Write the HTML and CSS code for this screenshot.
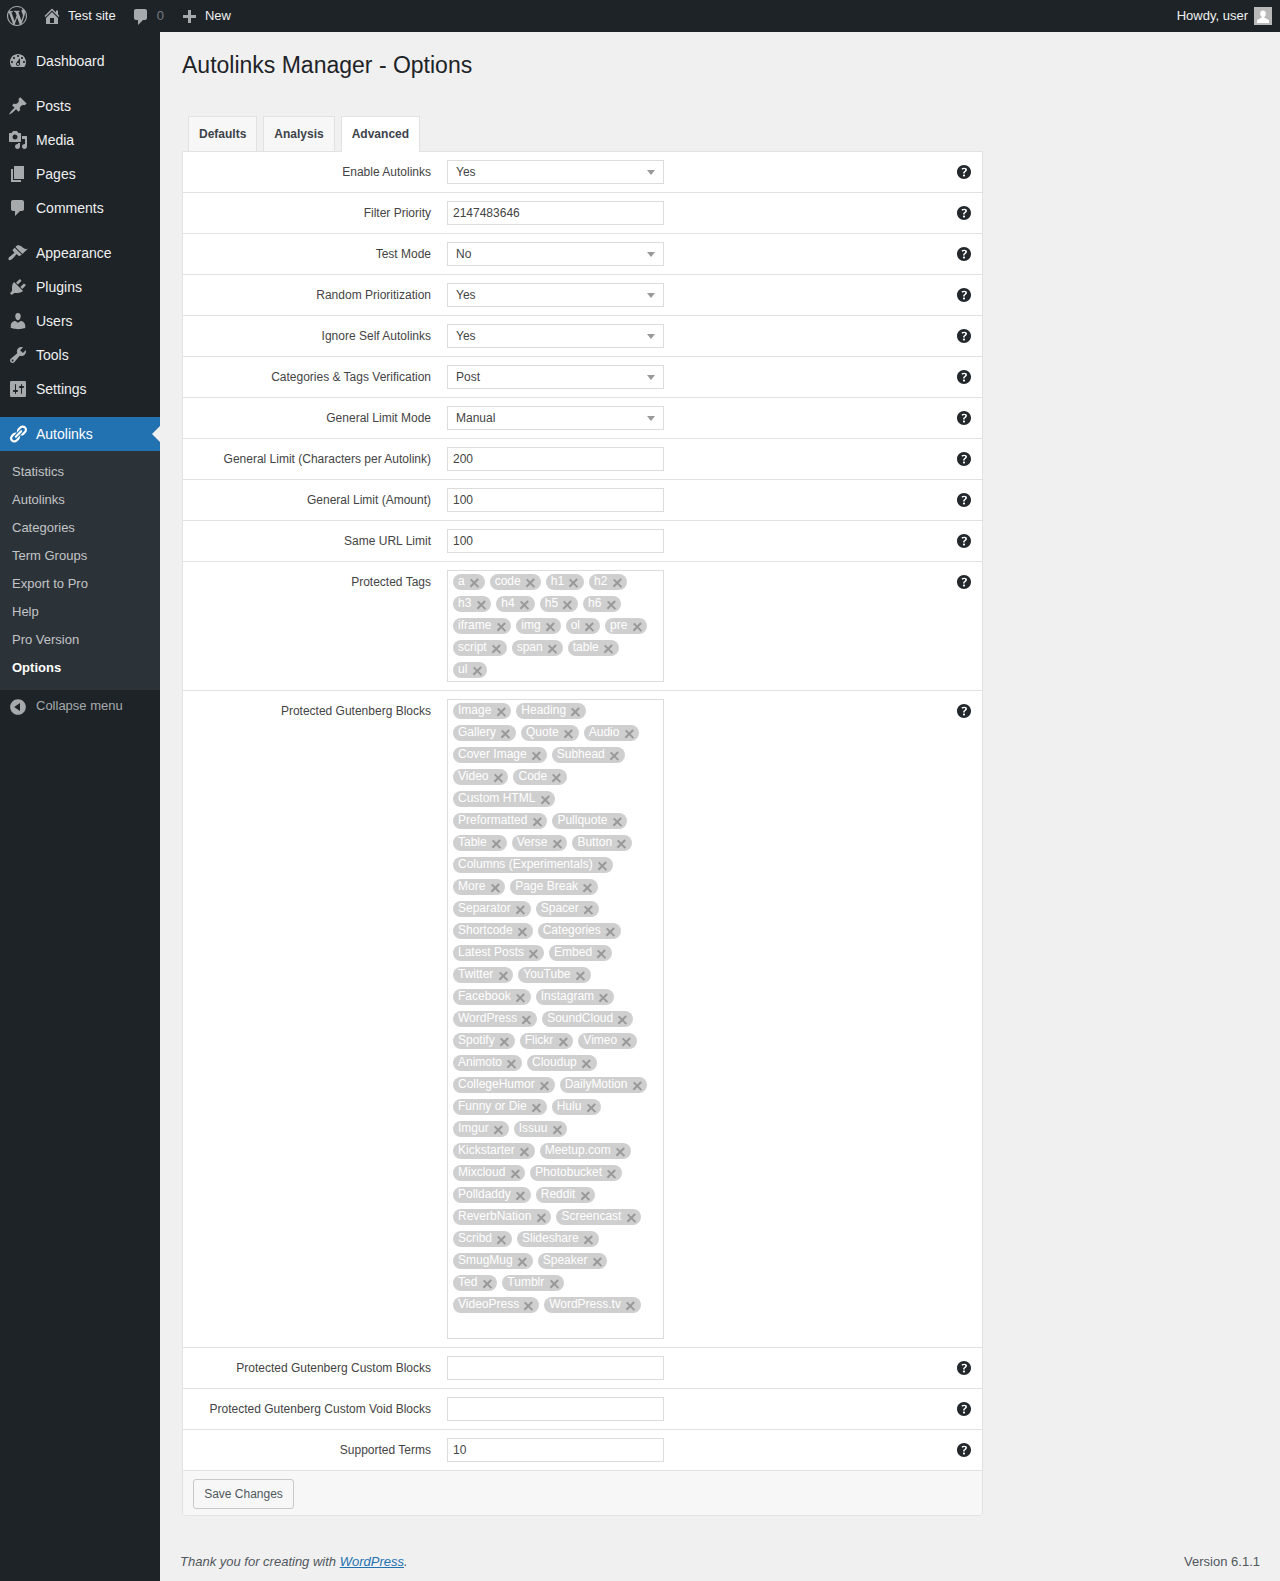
FILE: index.html
```html
<!DOCTYPE html>
<html lang="en">
<head>
<meta charset="utf-8">
<title>Autolinks Manager - Options</title>
<link rel="stylesheet" href="styles.css">
</head>
<body>
<svg class="defs" width="0" height="0" aria-hidden="true">
<symbol id="i-wp" viewBox="0 0 20 20"><path d="M20 10c0-5.51-4.49-10-10-10C4.48 0 0 4.49 0 10c0 5.52 4.48 10 10 10 5.51 0 10-4.48 10-10zM7.78 15.37L4.37 6.22c.55-.02 1.17-.08 1.17-.08.5-.06.44-1.13-.06-1.11 0 0-1.45.11-2.37.11-.18 0-.37 0-.58-.01C4.12 2.69 6.87 1.11 10 1.11c2.33 0 4.45.87 6.05 2.34-.68-.11-1.65.39-1.65 1.58 0 .74.45 1.36.9 2.1.35.61.55 1.36.55 2.46 0 1.49-1.4 5-1.4 5l-3.03-8.37c.54-.02.82-.17.82-.17.5-.05.44-1.25-.06-1.22 0 0-1.44.12-2.38.12-.87 0-2.33-.12-2.33-.12-.5-.03-.56 1.2-.06 1.22l.92.08 1.26 3.41zM17.41 10c.24-.64.74-1.87.43-4.25.7 1.29 1.05 2.71 1.05 4.25 0 3.29-1.73 6.24-4.4 7.78.97-2.59 1.94-5.2 2.92-7.78zM6.1 18.09C3.12 16.65 1.11 13.53 1.11 10c0-1.3.23-2.48.72-3.59C3.25 10.3 4.67 14.2 6.1 18.09zm4.03-6.63l2.58 6.98c-.86.29-1.76.45-2.71.45-.79 0-1.57-.11-2.29-.33.81-2.38 1.62-4.74 2.42-7.1z"/></symbol>
<symbol id="i-home" viewBox="0 0 20 20"><path fill-rule="evenodd" d="M16 8.5l1.53 1.53-1.06 1.06L10 4.62l-6.47 6.47-1.06-1.06L10 2.5l4 4v-2h2v4zm-6-2.46l6 5.99V18H4v-5.97zM12 17v-5H8v5h4z"/></symbol>
<symbol id="i-comment" viewBox="0 0 20 20"><path d="M5 2h9c1.1 0 2 .9 2 2v7c0 1.1-.9 2-2 2h-2l-5 5v-5H5c-1.1 0-2-.9-2-2V4c0-1.1.9-2 2-2z"/></symbol>
<symbol id="i-plus" viewBox="0 0 20 20"><path d="M17 7v3h-5v5H9v-5H4V7h5V2h3v5h5z"/></symbol>
<symbol id="i-dash" viewBox="0 0 20 20"><path fill-rule="evenodd" d="M3.76 16h12.48c1.1-1.37 1.76-3.11 1.76-5 0-4.42-3.58-8-8-8s-8 3.58-8 8c0 1.89.66 3.63 1.76 5zM10 4c.55 0 1 .45 1 1s-.45 1-1 1-1-.45-1-1 .45-1 1-1zM6 6c.55 0 1 .45 1 1s-.45 1-1 1-1-.45-1-1 .45-1 1-1zm8 0c.55 0 1 .45 1 1s-.45 1-1 1-1-.45-1-1 .45-1 1-1zm-5.37 5.55L12 7v6c0 1.1-.9 2-2 2s-2-.9-2-2c0-.57.24-1.08.63-1.45zM4 10c.55 0 1 .45 1 1s-.45 1-1 1-1-.45-1-1 .45-1 1-1zm12 0c.55 0 1 .45 1 1s-.45 1-1 1-1-.45-1-1 .45-1 1-1zm-5 3c0-.55-.45-1-1-1s-1 .45-1 1 .45 1 1 1 1-.45 1-1z"/></symbol>
<symbol id="i-post" viewBox="0 0 20 20"><path d="M10.44 3.02l1.82-1.82 6.36 6.35-1.83 1.82c-1.05-.68-2.48-.57-3.41.36l-.75.75c-.92.93-1.04 2.35-.35 3.41l-1.83 1.82-2.41-2.41-2.8 2.79c-.42.42-3.38 2.71-3.8 2.29s1.86-3.39 2.28-3.81l2.79-2.79L4.1 9.36l1.83-1.82c1.05.69 2.48.57 3.4-.36l.75-.75c.93-.92 1.05-2.35.36-3.41z"/></symbol>
<symbol id="i-media" viewBox="0 0 20 20"><path fill-rule="evenodd" d="M13 11V4c0-.55-.45-1-1-1h-1.67L9 1H5L3.67 3H2c-.55 0-1 .45-1 1v7c0 .55.45 1 1 1h10c.55 0 1-.45 1-1zM7 4.5c1.38 0 2.5 1.12 2.5 2.5S8.38 9.5 7 9.5 4.5 8.38 4.5 7 5.62 4.5 7 4.5zM14 6h5v10.5c0 1.38-1.12 2.5-2.5 2.5S14 17.88 14 16.5s1.12-2.5 2.5-2.5c.17 0 .34.02.5.05V9h-3V6zm-4 8.05V13h2v3.5c0 1.38-1.12 2.5-2.5 2.5S7 17.88 7 16.5 8.12 14 9.5 14c.17 0 .34.02.5.05z"/></symbol>
<symbol id="i-page" viewBox="0 0 20 20"><path d="M6 15V2h10v13H6zm-1 1h8v2H3V5h2v11z"/></symbol>
<symbol id="i-appearance" viewBox="0 0 20 20"><path d="M14.48 11.06L7.41 3.99l1.5-1.5c.5-.56 2.3-.47 3.51.32 1.21.8 1.43 1.28 2.91 2.1 1.18.64 2.45 1.26 4.45.85zm-.71.71L6.7 4.7 4.93 6.47c-.39.39-.39 1.02 0 1.41l1.06 1.06c.39.39.39 1.03 0 1.42-.6.6-1.43 1.11-2.21 1.69-.35.26-.7.53-1.01.84C1.43 13.23.4 14.79.4 15.7c0 .91.64 1.52 1.28 1.52.91 0 2.47-1.02 3.81-2.36.31-.31.58-.66.85-1.02.57-.78 1.08-1.61 1.69-2.21.39-.39 1.02-.39 1.41 0l1.06 1.06c.39.39 1.02.39 1.41 0z"/></symbol>
<symbol id="i-plugin" viewBox="0 0 20 20"><path d="M13.11 4.36L9.87 7.6 8 5.73l3.24-3.24c.35-.34 1.05-.2 1.56.32.52.51.66 1.21.31 1.55zm-8 1.77l.91-1.12 9.01 9.01-1.19.84c-.71.71-2.63 1.16-3.82 1.16H6.14L4.9 17.26c-.59.59-1.54.59-2.12 0-.59-.58-.59-1.53 0-2.12l1.24-1.24v-3.88c0-1.13.4-3.19 1.09-3.89zm7.26 3.97l3.24-3.24c.34-.35 1.04-.21 1.55.31.52.51.66 1.21.31 1.55l-3.24 3.25z"/></symbol>
<symbol id="i-users" viewBox="0 0 20 20"><path d="M10 9.25c-2.27 0-2.73-3.44-2.73-3.44C7 4.02 7.82 2 9.97 2c2.16 0 2.98 2.02 2.71 3.81 0 0-.41 3.44-2.68 3.44zm0 2.57L12.72 10c2.39 0 4.52 2.33 4.52 4.53v2.49s-3.65 1.13-7.24 1.13c-3.65 0-7.24-1.13-7.24-1.13v-2.49c0-2.25 1.94-4.48 4.47-4.48z"/></symbol>
<symbol id="i-tools" viewBox="0 0 20 20"><path fill-rule="evenodd" d="M16.68 9.77c-1.34 1.34-3.3 1.67-4.95.99l-5.41 6.52c-.99.99-2.59.99-3.58 0s-.99-2.59 0-3.57l6.52-5.42c-.68-1.65-.35-3.61.99-4.95 1.28-1.28 3.12-1.62 4.72-1.06l-2.89 2.89 2.82 2.82 2.86-2.87c.53 1.58.18 3.39-1.08 4.65zM3.81 16.21c.4.39 1.04.39 1.43 0 .4-.4.4-1.04 0-1.43-.39-.4-1.03-.4-1.43 0-.39.39-.39 1.03 0 1.43z"/></symbol>
<symbol id="i-settings" viewBox="0 0 20 20"><path fill-rule="evenodd" d="M18 16V4c0-1.1-.1-2-1-2H3c-.9 0-1 .9-1 2v12c0 1.1.1 2 1 2h14c.9 0 1-.9 1-2zM8 11h1c.55 0 1 .45 1 1s-.45 1-1 1H8v1.5c0 .28-.22.5-.5.5s-.5-.22-.5-.5V13H6c-.55 0-1-.45-1-1s.45-1 1-1h1V5.5c0-.28.22-.5.5-.5s.5.22.5.5V11zm5-2h-1c-.55 0-1-.45-1-1s.45-1 1-1h1V5.5c0-.28.22-.5.5-.5s.5.22.5.5V7h1c.55 0 1 .45 1 1s-.45 1-1 1h-1v5.5c0 .28-.22.5-.5.5s-.5-.22-.5-.5V9z"/></symbol>
<symbol id="i-links" viewBox="0 0 20 20"><path d="M17.74 2.76c1.68 1.69 1.68 4.41 0 6.1l-1.53 1.52c-1.12 1.12-2.7 1.47-4.14 1.09l2.62-2.61.76-.77.76-.76c.84-.84.84-2.2 0-3.04-.84-.85-2.2-.85-3.04 0l-.77.76-3.38 3.38c-.37-1.44-.02-3.02 1.1-4.14l1.52-1.53c1.69-1.68 4.42-1.68 6.1 0zM8.59 13.43l5.34-5.34c.42-.42.42-1.1 0-1.52-.44-.43-1.13-.39-1.53 0l-5.33 5.34c-.42.42-.42 1.1 0 1.52.44.43 1.13.39 1.52 0zm-.76 2.29l4.14-4.15c.38 1.44.03 3.02-1.09 4.14l-1.52 1.53c-1.69 1.68-4.41 1.68-6.1 0-1.68-1.68-1.68-4.42 0-6.1l1.53-1.52c1.12-1.12 2.7-1.47 4.14-1.1l-4.14 4.15c-.85.84-.85 2.2 0 3.05.84.84 2.2.84 3.04 0z"/></symbol>
<symbol id="i-collapse" viewBox="0 0 20 20"><path fill-rule="evenodd" d="M10 2.16c4.33 0 7.84 3.51 7.84 7.84s-3.51 7.84-7.84 7.84S2.16 14.33 2.16 10 5.71 2.16 10 2.16zm2 11.72V6.12L6.18 9.97z"/></symbol>
<symbol id="i-help" viewBox="0 0 20 20"><path fill-rule="evenodd" d="M17 10c0-3.87-3.14-7-7-7-3.87 0-7 3.13-7 7 0 3.86 3.13 7 7 7 3.86 0 7-3.14 7-7zm-6.3 1.48H9.14v-.43c0-.38.08-.7.24-.98s.46-.57.88-.89c.41-.29.68-.53.81-.71.14-.18.2-.39.2-.62 0-.25-.09-.44-.28-.58-.19-.13-.45-.19-.79-.19-.58 0-1.25.19-2 .57l-.64-1.28c.87-.49 1.8-.74 2.77-.74.81 0 1.45.2 1.92.58.48.39.71.91.71 1.55 0 .43-.09.8-.29 1.11-.19.32-.57.67-1.11 1.06-.38.28-.61.49-.71.63-.1.15-.15.34-.15.57v.35zm-1.47 2.74c-.18-.17-.27-.42-.27-.73 0-.33.08-.58.26-.75s.43-.25.77-.25c.32 0 .57.09.75.26s.27.42.27.74c0 .3-.09.55-.27.72-.18.18-.43.27-.75.27-.33 0-.58-.09-.76-.26z"/></symbol>
<symbol id="i-avatar" viewBox="0 0 18 18"><path fill="#b9b9b9" d="M0 0h18v18H0z"/><path fill="#fff" d="M9 3.400c1.900 0 2.900 1.500 2.800 3.400-.1 1.400-.7 2.600-1.400 3.100v1.100c1.700.4 3.700 1.200 4.600 2.400V16H3v-2.600c.9-1.200 2.900-2 4.600-2.400V9.900C6.900 9.400 6.300 8.200 6.200 6.800 6.100 4.900 7.100 3.400 9 3.400z"/></symbol>
</svg>

<header class="adminbar">
  <a class="bar-item bar-logo"><svg class="bar-ico"><use href="#i-wp"/></svg></a>
  <a class="bar-item bar-site"><svg class="bar-ico"><use href="#i-home"/></svg><span>Test site</span></a>
  <a class="bar-item bar-comments"><svg class="bar-ico"><use href="#i-comment"/></svg><span class="dim">0</span></a>
  <a class="bar-item bar-new"><svg class="bar-ico"><use href="#i-plus"/></svg><span>New</span></a>
  <a class="bar-item bar-user"><span>Howdy, user</span><svg class="avatar"><use href="#i-avatar"/></svg></a>
</header>

<div class="layout">
  <nav class="sidebar">
    <ul class="menu">
      <li class="mi"><svg class="mi-ico"><use href="#i-dash"/></svg>Dashboard</li>
      <li class="sep"></li>
      <li class="mi"><svg class="mi-ico"><use href="#i-post"/></svg>Posts</li>
      <li class="mi"><svg class="mi-ico"><use href="#i-media"/></svg>Media</li>
      <li class="mi"><svg class="mi-ico"><use href="#i-page"/></svg>Pages</li>
      <li class="mi"><svg class="mi-ico"><use href="#i-comment"/></svg>Comments</li>
      <li class="sep"></li>
      <li class="mi"><svg class="mi-ico"><use href="#i-appearance"/></svg>Appearance</li>
      <li class="mi"><svg class="mi-ico"><use href="#i-plugin"/></svg>Plugins</li>
      <li class="mi"><svg class="mi-ico"><use href="#i-users"/></svg>Users</li>
      <li class="mi"><svg class="mi-ico"><use href="#i-tools"/></svg>Tools</li>
      <li class="mi"><svg class="mi-ico"><use href="#i-settings"/></svg>Settings</li>
      <li class="sep"></li>
      <li class="mi mi-active"><svg class="mi-ico"><use href="#i-links"/></svg>Autolinks</li>
      <li class="submenu">
        <a>Statistics</a><a>Autolinks</a><a>Categories</a><a>Term Groups</a><a>Export to Pro</a><a>Help</a><a>Pro Version</a><a class="sub-current">Options</a>
      </li>
      <li class="collapse"><svg class="mi-ico"><use href="#i-collapse"/></svg>Collapse menu</li>
    </ul>
  </nav>

  <main class="content">
    <h1 class="title">Autolinks Manager - Options</h1>
    <div class="tabs">
      <a class="tab">Defaults</a><a class="tab">Analysis</a><a class="tab tab-on">Advanced</a>
    </div>
    <form class="panel">
      <div class="row"><label>Enable Autolinks</label><div class="select">Yes</div><svg class="help"><use href="#i-help"/></svg></div>
      <div class="row"><label>Filter Priority</label><div class="input">2147483646</div><svg class="help"><use href="#i-help"/></svg></div>
      <div class="row"><label>Test Mode</label><div class="select">No</div><svg class="help"><use href="#i-help"/></svg></div>
      <div class="row"><label>Random Prioritization</label><div class="select">Yes</div><svg class="help"><use href="#i-help"/></svg></div>
      <div class="row"><label>Ignore Self Autolinks</label><div class="select">Yes</div><svg class="help"><use href="#i-help"/></svg></div>
      <div class="row"><label>Categories &amp; Tags Verification</label><div class="select">Post</div><svg class="help"><use href="#i-help"/></svg></div>
      <div class="row"><label>General Limit Mode</label><div class="select">Manual</div><svg class="help"><use href="#i-help"/></svg></div>
      <div class="row"><label>General Limit (Characters per Autolink)</label><div class="input">200</div><svg class="help"><use href="#i-help"/></svg></div>
      <div class="row"><label>General Limit (Amount)</label><div class="input">100</div><svg class="help"><use href="#i-help"/></svg></div>
      <div class="row"><label>Same URL Limit</label><div class="input">100</div><svg class="help"><use href="#i-help"/></svg></div>
      <div class="row"><label>Protected Tags</label>
        <div class="multi">
          <span class="chip">a<i></i></span><span class="chip">code<i></i></span><span class="chip">h1<i></i></span><span class="chip">h2<i></i></span>
          <span class="chip">h3<i></i></span><span class="chip">h4<i></i></span><span class="chip">h5<i></i></span><span class="chip">h6<i></i></span>
          <span class="chip">iframe<i></i></span><span class="chip">img<i></i></span><span class="chip">ol<i></i></span><span class="chip">pre<i></i></span>
          <span class="chip">script<i></i></span><span class="chip">span<i></i></span><span class="chip">table<i></i></span>
          <span class="chip">ul<i></i></span>
        </div>
        <svg class="help"><use href="#i-help"/></svg></div>
      <div class="row"><label>Protected Gutenberg Blocks</label>
        <div class="multi">
          <span class="chip">Image<i></i></span><span class="chip">Heading<i></i></span>
          <span class="chip">Gallery<i></i></span><span class="chip">Quote<i></i></span><span class="chip">Audio<i></i></span>
          <span class="chip">Cover Image<i></i></span><span class="chip">Subhead<i></i></span>
          <span class="chip">Video<i></i></span><span class="chip">Code<i></i></span>
          <span class="chip">Custom HTML<i></i></span>
          <span class="chip">Preformatted<i></i></span><span class="chip">Pullquote<i></i></span>
          <span class="chip">Table<i></i></span><span class="chip">Verse<i></i></span><span class="chip">Button<i></i></span>
          <span class="chip">Columns (Experimentals)<i></i></span>
          <span class="chip">More<i></i></span><span class="chip">Page Break<i></i></span>
          <span class="chip">Separator<i></i></span><span class="chip">Spacer<i></i></span>
          <span class="chip">Shortcode<i></i></span><span class="chip">Categories<i></i></span>
          <span class="chip">Latest Posts<i></i></span><span class="chip">Embed<i></i></span>
          <span class="chip">Twitter<i></i></span><span class="chip">YouTube<i></i></span>
          <span class="chip">Facebook<i></i></span><span class="chip">Instagram<i></i></span>
          <span class="chip">WordPress<i></i></span><span class="chip">SoundCloud<i></i></span>
          <span class="chip">Spotify<i></i></span><span class="chip">Flickr<i></i></span><span class="chip">Vimeo<i></i></span>
          <span class="chip">Animoto<i></i></span><span class="chip">Cloudup<i></i></span>
          <span class="chip">CollegeHumor<i></i></span><span class="chip">DailyMotion<i></i></span>
          <span class="chip">Funny or Die<i></i></span><span class="chip">Hulu<i></i></span>
          <span class="chip">Imgur<i></i></span><span class="chip">Issuu<i></i></span>
          <span class="chip">Kickstarter<i></i></span><span class="chip">Meetup.com<i></i></span>
          <span class="chip">Mixcloud<i></i></span><span class="chip">Photobucket<i></i></span>
          <span class="chip">Polldaddy<i></i></span><span class="chip">Reddit<i></i></span>
          <span class="chip">ReverbNation<i></i></span><span class="chip">Screencast<i></i></span>
          <span class="chip">Scribd<i></i></span><span class="chip">Slideshare<i></i></span>
          <span class="chip">SmugMug<i></i></span><span class="chip">Speaker<i></i></span>
          <span class="chip">Ted<i></i></span><span class="chip">Tumblr<i></i></span>
          <span class="chip">VideoPress<i></i></span><span class="chip">WordPress.tv<i></i></span>
          <span class="chip-input"></span>
        </div>
        <svg class="help"><use href="#i-help"/></svg></div>
      <div class="row"><label>Protected Gutenberg Custom Blocks</label><div class="input"></div><svg class="help"><use href="#i-help"/></svg></div>
      <div class="row"><label>Protected Gutenberg Custom Void Blocks</label><div class="input"></div><svg class="help"><use href="#i-help"/></svg></div>
      <div class="row"><label>Supported Terms</label><div class="input">10</div><svg class="help"><use href="#i-help"/></svg></div>
      <div class="savebar"><button type="button" class="save">Save Changes</button></div>
    </form>
    <footer class="foot">
      <span class="thanks">Thank you for creating with <a>WordPress</a>.</span>
      <span>Version 6.1.1</span>
    </footer>
  </main>
</div>
</body>
</html>
```
FILE: styles.css
```css
* { box-sizing: border-box; }
html, body { margin: 0; padding: 0; }
body {
  min-height: 1581px;
  background: #f0f0f0;
  color: #3c434a;
  font-family: "Liberation Sans", Arial, sans-serif;
  font-size: 13px;
  display: flex;
  flex-direction: column;
}
.defs { position: absolute; }
ul { list-style: none; margin: 0; padding: 0; }

.adminbar {
  height: 32px;
  background: #1d2327;
  color: #f0f0f1;
  display: flex;
  align-items: center;
  padding: 0 8px 0 7px;
  flex: none;
}
.bar-item { display: flex; align-items: center; }
.bar-item span { margin-bottom: 2px; }
.bar-ico { width: 20px; height: 20px; fill: #a7aaad; flex: none; }
.bar-logo { margin-right: 15px; }
.bar-site { gap: 6px; margin-right: 15.5px; }
.bar-comments { gap: 5.5px; margin-right: 15px; }
.bar-comments .bar-ico { margin-top: 2px; }
.bar-comments .dim { color: #787c82; }
.bar-new { gap: 6px; }
.bar-new .bar-ico { margin-top: 4px; }
.bar-user { margin-left: auto; gap: 6px; }
.avatar { width: 18px; height: 18px; display: block; }

.layout { display: flex; flex: 1; }
.sidebar { width: 160px; background: #1d2327; flex: none; }
.menu { padding-top: 12px; }
.mi {
  height: 34px;
  display: flex;
  align-items: center;
  font-size: 14px;
  color: #f0f0f1;
  padding-left: 8px;
  gap: 8px;
  position: relative;
}
.mi-ico { width: 20px; height: 20px; fill: #a7aaad; flex: none; }
.sep { height: 11px; }
.mi-active { background: #2271b1; color: #fff; }
.mi-active .mi-ico { fill: #fff; }
.mi-active::after {
  content: "";
  position: absolute;
  right: 0;
  top: 9px;
  border: 8px solid transparent;
  border-right-color: #f0f0f0;
  border-left-width: 0;
}
.submenu { background: #2c3338; padding: 7px 0 8px; }
.submenu a {
  display: block;
  height: 28px;
  line-height: 28px;
  padding-left: 12px;
  font-size: 13px;
  color: #c3c4c7;
}
.submenu .sub-current { color: #fff; font-weight: 700; }
.collapse {
  display: flex;
  align-items: flex-start;
  gap: 8px;
  padding: 7px 0 0 8px;
  font-size: 13px;
  color: #a7aaad;
  line-height: 18px;
}

.content { flex: 1; min-width: 0; padding: 0 20px 0 22px; display: flex; flex-direction: column; }
.title {
  margin: 20px 0 0;
  font-size: 23px;
  font-weight: 400;
  line-height: 27px;
  color: #1d2327;
}
.tabs { display: flex; gap: 6px; margin: 37px 0 0 6px; height: 35px; position: relative; z-index: 1; }
.tab {
  height: 35px;
  padding: 0 10px;
  border: 1px solid #e2e2e2;
  border-bottom: 0;
  background: #f7f7f7;
  font-size: 12px;
  font-weight: 700;
  line-height: 35px;
  color: #3c434a;
}
.tab-on { background: #fff; height: 36px; }

.panel {
  width: 801px;
  border: 1px solid #e2e2e2;
  border-radius: 0 0 3px 3px;
  background: #fff;
}
.row {
  display: flex;
  align-items: flex-start;
  padding: 8px 8px 8px 0;
  border-bottom: 1px solid #e2e2e2;
}
.row label {
  width: 248px;
  margin-right: 16px;
  text-align: right;
  font-size: 12px;
  line-height: 24px;
  color: #444;
  flex: none;
}
.select, .input, .multi {
  width: 217px;
  border: 1px solid #dcdcdc;
  background: #fff;
  font-size: 12px;
  color: #444;
  flex: none;
}
.select, .input { height: 24px; line-height: 22px; padding-left: 5px; }
.select { padding-left: 8px; position: relative; }
.select::after {
  content: "";
  position: absolute;
  right: 8px;
  top: 9px;
  border: 4px solid transparent;
  border-top: 5px solid #999;
  border-bottom: 0;
}
.help { width: 20px; height: 20px; margin: 2px 0 0 auto; fill: #23282d; flex: none; }

.multi {
  display: flex;
  flex-wrap: wrap;
  align-content: flex-start;
  gap: 6px 5px;
  padding: 3px 13px 3px 5px;
}
.chip {
  display: flex;
  height: 16px;
  padding: 0 5px;
  border-radius: 8px;
  background: #cfcfcf;
  color: #fff;
  font-size: 12px;
  line-height: 14px;
  white-space: nowrap;
}
.chip i {
  position: relative;
  display: block;
  width: 9px;
  height: 9px;
  margin: 5px 1px 0 5px;
  flex: none;
}
.chip i::before, .chip i::after {
  content: "";
  position: absolute;
  left: -0.75px;
  top: 3.3px;
  width: 10.5px;
  height: 2.4px;
  background: #999;
  transform: rotate(45deg);
}
.chip i::after { transform: rotate(-45deg); }
.chip-input { width: 30px; height: 16px; }

.savebar { padding: 8px 10px 6px; background: #f7f7f7; border-radius: 0 0 3px 3px; }
.save {
  display: block;
  width: 101px;
  height: 30px;
  padding: 0;
  border: 1px solid #c8c8c8;
  border-radius: 3px;
  background: #f7f7f7;
  font: 12px/28px "Liberation Sans", Arial, sans-serif;
  color: #50575e;
}
.foot {
  display: flex;
  justify-content: space-between;
  margin: 37px 0 0 -2px;
  font-size: 13px;
  line-height: 18px;
  color: #50575e;
}
.thanks { font-style: italic; }
.thanks a { color: #2271b1; text-decoration: underline; }
```
